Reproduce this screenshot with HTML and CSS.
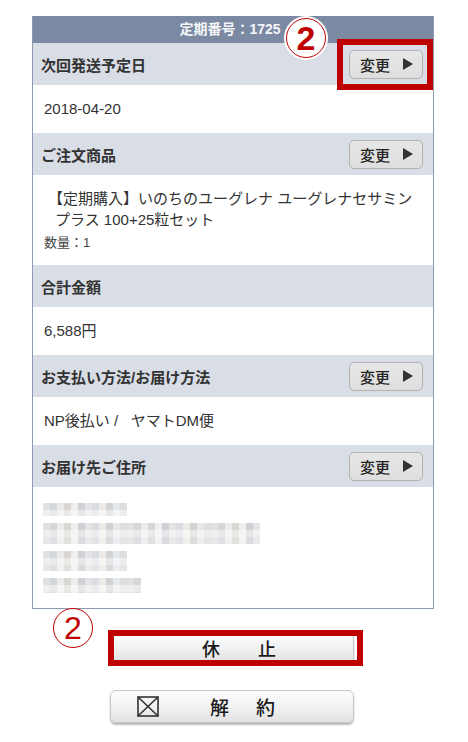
FILE: index.html
```html
<!DOCTYPE html>
<html lang="ja">
<head>
<meta charset="utf-8">
<title>定期購入</title>
<link rel="stylesheet" href="styles.css">
</head>
<body>
<div class="page">
  <section class="panel">
    <div class="panel-title">定期番号：1725</div>

    <div class="row-head">
      <span class="head-label">次回発送予定日</span>
      <button class="change">変更<svg class="tri" viewBox="0 0 10 12" width="10" height="12"><polygon points="0,0 10,6 0,12"/></svg></button>
    </div>
    <div class="row-val">2018-04-20</div>

    <div class="row-head">
      <span class="head-label">ご注文商品</span>
      <button class="change">変更<svg class="tri" viewBox="0 0 10 12" width="10" height="12"><polygon points="0,0 10,6 0,12"/></svg></button>
    </div>
    <div class="row-val multi">
      <p class="product">【定期購入】いのちのユーグレナ ユーグレナセサミン<br>プラス 100+25粒セット</p>
      <p class="qty">数量：1</p>
    </div>

    <div class="row-head">
      <span class="head-label">合計金額</span>
    </div>
    <div class="row-val">6,588円</div>

    <div class="row-head">
      <span class="head-label">お支払い方法/お届け方法</span>
      <button class="change">変更<svg class="tri" viewBox="0 0 10 12" width="10" height="12"><polygon points="0,0 10,6 0,12"/></svg></button>
    </div>
    <div class="row-val">NP後払い /&nbsp;&nbsp; ヤマトDM便</div>

    <div class="row-head">
      <span class="head-label">お届け先ご住所</span>
      <button class="change">変更<svg class="tri" viewBox="0 0 10 12" width="10" height="12"><polygon points="0,0 10,6 0,12"/></svg></button>
    </div>
    <div class="row-val address">
      <div class="mosaic m1"></div>
      <div class="mosaic m2"></div>
      <div class="mosaic m3"></div>
      <div class="mosaic m4"></div>
    </div>
  </section>

  <div class="actions">
    <button class="big pause">休　止</button>
    <button class="big cancel">
      <svg class="xbox" viewBox="0 0 22 21" width="22" height="21"><rect x="1" y="1" width="20" height="19"/><line x1="1" y1="1" x2="21" y2="20"/><line x1="21" y1="1" x2="1" y2="20"/></svg>
      <span class="cancel-label">解　約</span>
    </button>
  </div>

  <div class="mark mark-top">2</div>
  <div class="frame frame-change"></div>
  <div class="mark mark-bottom">2</div>
  <div class="frame frame-pause"></div>
</div>
</body>
</html>
```

FILE: styles.css
```css
* { box-sizing: border-box; }

html, body {
  margin: 0;
  padding: 0;
  background: #ffffff;
}

body {
  font-family: "Liberation Sans", "Noto Sans CJK JP", sans-serif;
  color: #333333;
}

.page {
  position: relative;
  width: 468px;
  height: 742px;
  overflow: hidden;
}

.panel {
  margin: 16px 0 0 32px;
  width: 402px;
  border: 1px solid #8c9ab3;
  border-top: none;
}

.panel-title {
  height: 27px;
  line-height: 27px;
  background: #7b8aa2;
  color: #f4f6f9;
  font-weight: bold;
  font-size: 14px;
  text-align: center;
  padding-right: 6px;
}

.row-head {
  height: 42px;
  display: flex;
  align-items: center;
  justify-content: space-between;
  padding: 0 10px 0 8px;
  background: #d9dde5;
}

.head-label {
  font-size: 15px;
  font-weight: bold;
  color: #333333;
}

.change {
  width: 74px;
  height: 29px;
  display: flex;
  align-items: center;
  padding: 0 0 0 10px;
  border: 1px solid #b2b2b2;
  border-radius: 5px;
  background: linear-gradient(#e6e6e6, #dedede);
  font-family: "Liberation Sans", "Noto Sans CJK JP", sans-serif;
  font-size: 15px;
  font-weight: 500;
  color: #222222;
}

.tri {
  margin-left: 13px;
  fill: #333333;
}

.row-val {
  height: 48px;
  line-height: 48px;
  padding-left: 11px;
  font-size: 15px;
  color: #333333;
  background: #ffffff;
}

.row-val.multi {
  height: 90px;
  line-height: normal;
  padding: 13px 11px 0 11px;
}

.product {
  margin: 0;
  padding-left: 11px;
  text-indent: -7px;
  line-height: 21px;
  font-size: 15px;
}

.qty {
  margin: 3px 0 0 0;
  font-size: 13px;
  line-height: 20px;
  color: #444444;
}

.row-val.address {
  height: 121px;
  line-height: normal;
  padding: 16px 0 0 10px;
}

.mosaic {
  filter: blur(0.6px);
  background:
    linear-gradient(rgba(255,255,255,0.15) 0 7px, rgba(255,255,255,0.55) 7px 14px, rgba(255,255,255,0.35) 14px 21px),
    linear-gradient(90deg,
      #dcdcdc 0 7px, #cdd0d4 7px 14px, #e8e8e8 14px 21px, #d3d0cb 21px 28px,
      #ececec 28px 35px, #c6c9cf 35px 42px, #dfdfdf 42px 49px, #d3d6dc 49px 56px,
      #ebe8e3 56px 63px, #cacaca 63px 70px, #e2e5e9 70px 77px, #d8d8d8 77px 84px);
  background-size: 100% 21px, 84px 100%;
}

.m1 { width: 84px; height: 13px; }
.m2 { width: 217px; height: 21px; margin-top: 7px; }
.m3 { width: 84px; height: 20px; margin-top: 7px; }
.m4 { width: 98px; height: 15px; margin-top: 7px; }

.actions {
  display: flex;
  flex-direction: column;
  gap: 27px;
  padding: 24px 0 0 110px;
}

.big {
  width: 244px;
  border: 1px solid #c6c6c6;
  border-radius: 6px;
  background: linear-gradient(#fdfdfd, #f0f0f0 55%, #e2e2e2);
  box-shadow: 0 2px 2px rgba(0, 0, 0, 0.28);
  font-family: "Noto Sans CJK JP", sans-serif;
  font-size: 18px;
  font-weight: 500;
  color: #1a1a1a;
  padding: 0;
}

.pause {
  height: 30px;
  letter-spacing: 10px;
  padding-left: 24px;
}

.cancel {
  height: 33px;
  display: flex;
  align-items: center;
  padding-left: 26px;
}

.xbox {
  fill: none;
  stroke: #333333;
  stroke-width: 1.6;
}

.cancel-label {
  margin-left: 51px;
  font-size: 19px;
  letter-spacing: 4px;
}

.mark {
  position: absolute;
  border-radius: 50%;
  background: #ffffff;
  color: #c00000;
  display: flex;
  align-items: center;
  justify-content: center;
  font-family: "Liberation Sans", sans-serif;
  line-height: 1;
}

.mark-top {
  left: 286px;
  top: 18px;
  width: 40px;
  height: 40px;
  border: 1.5px solid #c00000;
  box-shadow: 0 0 0 2px #ffffff;
  font-size: 34px;
  font-weight: bold;
}

.mark-bottom {
  left: 53px;
  top: 608px;
  width: 40px;
  height: 40px;
  border: 1.5px solid #c00000;
  font-size: 32px;
}

.frame {
  position: absolute;
  border: 6px solid #bf0000;
}

.frame-change {
  left: 337px;
  top: 39px;
  width: 96px;
  height: 51px;
}

.frame-pause {
  left: 108px;
  top: 630px;
  width: 255px;
  height: 36px;
}
```
